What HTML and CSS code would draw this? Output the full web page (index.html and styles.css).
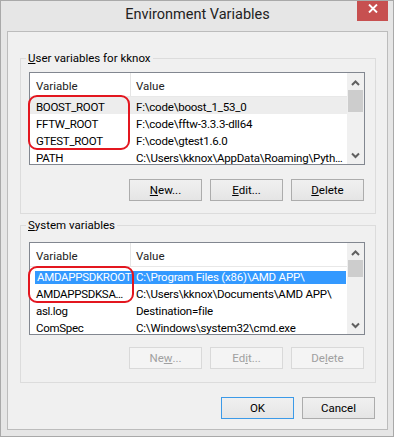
FILE: index.html
```html
<!DOCTYPE html>
<html lang="en">
<head>
    <meta charset="UTF-8">
    <title>Environment Variables</title>
    <link rel="stylesheet" href="styles.css">
</head>
<body>
    <div class="window">
        <div class="titlebar">
            <span></span>
            <div class="title">Environment Variables</div>
            <div class="close">
                <svg width="10" height="9" viewBox="0 0 10 9">
                    <path d="M1 0.5 L9 8.5 M9 0.5 L1 8.5" stroke="#fff" stroke-width="1.9" fill="none"/>
                </svg>
            </div>
        </div>

        <div class="client">
            <fieldset class="group">
                <legend><u>U</u>ser variables for kknox</legend>
                <div class="list">
                    <div class="list-body">
                        <div class="row header"><span class="c1">Variable</span><span class="c2">Value</span></div>
                        <div class="row hot"><span class="c1">BOOST_ROOT</span><span class="c2">F:\code\boost_1_53_0</span></div>
                        <div class="row"><span class="c1">FFTW_ROOT</span><span class="c2">F:\code\fftw-3.3.3-dll64</span></div>
                        <div class="row"><span class="c1">GTEST_ROOT</span><span class="c2">F:\code\gtest1.6.0</span></div>
                        <div class="row"><span class="c1">PATH</span><span class="c2">C:\Users\kknox\AppData\Roaming\Pyth…</span></div>
                    </div>
                    <div class="scrollbar">
                        <svg class="arrow" width="17" height="17" viewBox="0 0 17 17"><path d="M5 12 L8.5 8.5 L12 12" stroke="#606060" stroke-width="2" fill="none"/></svg>
                        <div class="track"><div class="thumb" style="height: 22px"></div></div>
                        <svg class="arrow" width="17" height="17" viewBox="0 0 17 17"><path d="M5 6.5 L8.5 10 L12 6.5" stroke="#606060" stroke-width="2" fill="none"/></svg>
                    </div>
                    <div class="mark mark-user"></div>
                </div>
                <div class="buttons">
                    <div class="btn"><u>N</u>ew...</div>
                    <div class="btn"><u>E</u>dit...</div>
                    <div class="btn"><u>D</u>elete</div>
                </div>
            </fieldset>

            <fieldset class="group group-system">
                <legend><u>S</u>ystem variables</legend>
                <div class="list">
                    <div class="list-body">
                        <div class="row header"><span class="c1">Variable</span><span class="c2">Value</span></div>
                        <div class="row selected"><span class="c1">AMDAPPSDKROOT</span><span class="c2">C:\Program Files (x86)\AMD APP\</span></div>
                        <div class="row"><span class="c1">AMDAPPSDKSA…</span><span class="c2">C:\Users\kknox\Documents\AMD APP\</span></div>
                        <div class="row"><span class="c1">asl.log</span><span class="c2">Destination=file</span></div>
                        <div class="row"><span class="c1">ComSpec</span><span class="c2">C:\Windows\system32\cmd.exe</span></div>
                    </div>
                    <div class="scrollbar">
                        <svg class="arrow" width="17" height="17" viewBox="0 0 17 17"><path d="M5 12 L8.5 8.5 L12 12" stroke="#606060" stroke-width="2" fill="none"/></svg>
                        <div class="track"><div class="thumb" style="height: 17px"></div></div>
                        <svg class="arrow" width="17" height="17" viewBox="0 0 17 17"><path d="M5 6.5 L8.5 10 L12 6.5" stroke="#606060" stroke-width="2" fill="none"/></svg>
                    </div>
                    <div class="mark mark-system"></div>
                </div>
                <div class="buttons">
                    <div class="btn disabled">Ne<u>w</u>...</div>
                    <div class="btn disabled">Ed<u>i</u>t...</div>
                    <div class="btn disabled">De<u>l</u>ete</div>
                </div>
            </fieldset>

            <div class="buttons dialog-buttons">
                <div class="btn default">OK</div>
                <div class="btn">Cancel</div>
            </div>
        </div>
    </div>
</body>
</html>
```

FILE: styles.css
```css
body {
    margin: 0;
    font-family: Roboto, "Noto Sans", sans-serif;
    font-size: 11.5px;
    color: #000;
}
.window {
    width: 394px;
    height: 437px;
    box-sizing: border-box;
    border: 1px solid #a9a9a9;
    background: #e6e6e6;
    padding: 0 5px 6px 6px;
    display: flex;
    flex-direction: column;
}
.titlebar {
    height: 30px;
    display: grid;
    grid-template-columns: 1fr auto 1fr;
    align-items: start;
}
.title {
    font-size: 14.5px;
    line-height: 27px;
    color: #222;
}
.close {
    justify-self: end;
    width: 31px;
    height: 20px;
    background: #c75050;
    display: flex;
    justify-content: center;
    padding-top: 3px;
    box-sizing: border-box;
}
.client {
    flex: 1;
    border: 1px solid #bcbcbc;
    background: #f0f0f0;
    padding: 18px 11px 0 12px;
}
.group {
    margin: 0;
    border: 1px solid #dcdcdc;
    padding: 6px 10px 12px 8px;
    min-width: 0;
}
.group-system {
    margin-top: 3px;
    padding-top: 9px;
    padding-bottom: 13px;
}
.group-system .buttons {
    margin-top: 12px;
}
legend {
    line-height: 16px;
    padding: 0 2px;
    margin-left: -3px;
}
.list {
    position: relative;
    display: flex;
    height: 93px;
    box-sizing: border-box;
    border: 1px solid #828790;
    background: #fff;
}
.list-body {
    flex: 1;
    min-width: 0;
    overflow: hidden;
}
.row {
    display: flex;
    height: 17px;
    line-height: 20px;
    white-space: nowrap;
}
.c1 {
    flex: 0 0 101px;
    min-width: 0;
    box-sizing: border-box;
    padding-left: 6px;
    letter-spacing: -0.3px;
}
.c2 {
    flex: 1;
    min-width: 0;
    padding-left: 5px;
    letter-spacing: -0.2px;
}
.header {
    height: 23px;
    line-height: 27px;
    border-bottom: 1px solid #e8e8e8;
    color: #222;
}
.header .c1,
.header .c2 {
    letter-spacing: 0;
}
.header .c1 {
    border-right: 1px solid #e5e5e5;
}
.hot {
    background: #ededed;
}
.selected {
    color: #fff;
    background: linear-gradient(transparent 4px, #3399ff 4px, #3399ff 17px, transparent 17px) no-repeat 5px 0 / 311px 100%;
}
.selected .c1 {
    padding-left: 7px;
}
.scrollbar {
    width: 17px;
    background: #f0f0f0;
    display: flex;
    flex-direction: column;
}
.arrow {
    display: block;
}
.track {
    flex: 1;
}
.thumb {
    margin: 0 1px;
    background: #cdcdcd;
}
.mark {
    position: absolute;
    left: -2px;
    border: 2px solid #e3161f;
    border-radius: 9px;
    box-sizing: border-box;
}
.mark-user {
    top: 22px;
    width: 102px;
    height: 55px;
}
.mark-system {
    top: 23px;
    width: 106px;
    height: 37px;
}
.buttons {
    display: flex;
    justify-content: flex-end;
    gap: 8px;
    margin-top: 14px;
    padding-right: 1px;
}
.btn {
    width: 73px;
    height: 22px;
    box-sizing: border-box;
    border: 1px solid #acacac;
    background: linear-gradient(#f0f0f0, #e5e5e5);
    display: flex;
    align-items: center;
    justify-content: center;
}
.btn.disabled {
    border-color: #d9d9d9;
    background: #f4f4f4;
    color: #a0a0a0;
}
.btn.default {
    border-color: #3c9ae8;
}
.dialog-buttons {
    margin-top: 14px;
}
```
